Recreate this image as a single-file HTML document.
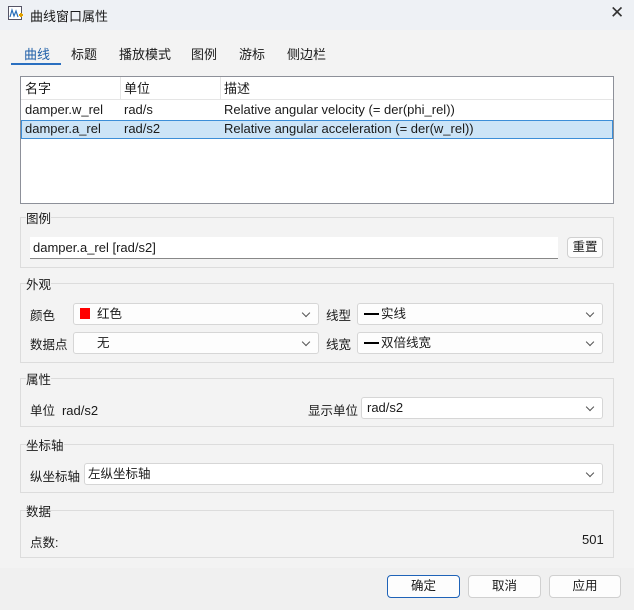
<!DOCTYPE html>
<html><head><meta charset="utf-8"><style>
*{box-sizing:border-box;margin:0;padding:0}
body{width:634px;height:610px;position:relative;background:#f3f3f3;font-family:"Liberation Sans","Noto Sans CJK SC",sans-serif;font-size:12.5px;color:#1a1a1a;overflow:hidden}
.a{position:absolute}
.grp{position:absolute;border:1px solid #dcdcdc;left:20px;width:594px}
.gl{position:absolute;background:#f3f3f3;left:30px}
.combo{position:absolute;background:#fdfdfd;border:1px solid #d6d6d6;border-radius:3px;height:22px;line-height:20px;padding-left:6px}
.combo::after{content:"";position:absolute;right:9px;top:6px;width:5px;height:5px;border-right:1px solid #555;border-bottom:1px solid #555;transform:rotate(45deg)}
.btn{position:absolute;background:#fdfdfd;border:1px solid #d0d0d0;border-radius:4px;text-align:center;line-height:21px;height:23px}
.cell{position:absolute;line-height:18px;font-size:13px}
</style></head><body>
<div class="a" style="left:0;top:0;width:634px;height:30px;background:#eef1f5"></div>
<svg class="a" style="left:8px;top:6px" width="16" height="16"><rect x="0.5" y="0.5" width="13" height="13" fill="#fff" stroke="#556"/><path d="M2 11 L4 4 L6 10 L8 5 L10 11" fill="none" stroke="#2a6fb8" stroke-width="1.2"/><path d="M11 9h4M13 7v4" stroke="#e0a000" stroke-width="2"/></svg>
<div class="a" style="left:30px;top:6px;font-size:13px">曲线窗口属性</div>
<div class="a" style="left:610px;top:3px;font-size:17px;color:#333">✕</div>

<div class="a" style="left:24px;top:44px;color:#1f5fa8;font-size:13px">曲线</div>
<div class="a" style="left:11px;top:63px;width:50px;height:2px;background:#2a6fc0"></div>
<div class="a" style="left:71px;top:44px;font-size:13px">标题</div>
<div class="a" style="left:119px;top:44px;font-size:13px">播放模式</div>
<div class="a" style="left:191px;top:44px;font-size:13px">图例</div>
<div class="a" style="left:239px;top:44px;font-size:13px">游标</div>
<div class="a" style="left:287px;top:44px;font-size:13px">侧边栏</div>

<div class="a" style="left:20px;top:76px;width:594px;height:128px;background:#fff;border:1px solid #8d9099"></div>
<div class="a" style="left:21px;top:77px;width:592px;height:23px;border-bottom:1px solid #e5e5e5"></div>
<div class="a" style="left:120px;top:77px;width:1px;height:23px;background:#e5e5e5"></div>
<div class="a" style="left:220px;top:77px;width:1px;height:23px;background:#e5e5e5"></div>
<div class="cell" style="left:25px;top:80px">名字</div><div class="cell" style="left:124px;top:80px">单位</div><div class="cell" style="left:224px;top:80px">描述</div>
<div class="cell" style="left:25px;top:101px">damper.w_rel</div><div class="cell" style="left:124px;top:101px">rad/s</div><div class="cell" style="left:224px;top:101px">Relative angular velocity (= der(phi_rel))</div>
<div class="a" style="left:21px;top:120px;width:592px;height:19px;background:#cce4f7;border:1px solid #3c8ed8"></div>
<div class="cell" style="left:25px;top:120px">damper.a_rel</div><div class="cell" style="left:124px;top:120px">rad/s2</div><div class="cell" style="left:224px;top:120px">Relative angular acceleration (= der(w_rel))</div>

<div class="grp" style="top:217px;height:51px"></div><div class="gl" style="top:208px;left:26px">图例</div>
<div class="a" style="left:30px;top:237px;width:528px;height:22px;background:#fff;border-bottom:1px solid #888;padding-left:3px;line-height:21px;font-size:13px">damper.a_rel [rad/s2]</div>
<div class="btn" style="left:567px;top:237px;width:36px;height:21px;line-height:19px">重置</div>

<div class="grp" style="top:283px;height:80px"></div><div class="gl" style="top:274px;left:26px">外观</div>
<div class="a" style="left:30px;top:305px">颜色</div>
<div class="combo" style="left:73px;top:303px;width:246px"><span style="display:inline-block;width:10px;height:11px;background:#f00;vertical-align:-1px;margin-right:7px"></span>红色</div>
<div class="a" style="left:326px;top:305px">线型</div>
<div class="combo" style="left:357px;top:303px;width:246px"><span style="display:inline-block;width:15px;height:2px;background:#000;vertical-align:3px;margin-right:2px"></span>实线</div>
<div class="a" style="left:30px;top:334px">数据点</div>
<div class="combo" style="left:73px;top:332px;width:246px;padding-left:23px">无</div>
<div class="a" style="left:326px;top:334px">线宽</div>
<div class="combo" style="left:357px;top:332px;width:246px"><span style="display:inline-block;width:15px;height:2px;background:#000;vertical-align:3px;margin-right:2px"></span>双倍线宽</div>

<div class="grp" style="top:378px;height:49px"></div><div class="gl" style="top:369px;left:26px">属性</div>
<div class="a" style="left:30px;top:400px">单位&nbsp;&nbsp;<span style="font-size:13px">rad/s2</span></div>
<div class="a" style="left:308px;top:400px">显示单位</div>
<div class="combo" style="left:361px;top:397px;width:242px;background:#fff;padding-left:5px;font-size:13px">rad/s2</div>

<div class="grp" style="top:444px;height:49px"></div><div class="gl" style="top:435px;left:26px">坐标轴</div>
<div class="a" style="left:30px;top:466px">纵坐标轴</div>
<div class="combo" style="left:84px;top:463px;width:519px;background:#fff;padding-left:3px">左纵坐标轴</div>

<div class="grp" style="top:510px;height:48px"></div><div class="gl" style="top:501px;left:26px">数据</div>
<div class="a" style="left:30px;top:532px">点数:</div>
<div class="a" style="left:582px;top:532px;font-size:13px">501</div>

<div class="a" style="left:0;top:568px;width:634px;height:42px;background:#f0f0f0"></div>
<div class="btn" style="left:387px;top:575px;width:73px;border:1px solid #1f63b8">确定</div>
<div class="btn" style="left:468px;top:575px;width:73px">取消</div>
<div class="btn" style="left:549px;top:575px;width:72px">应用</div>
</body></html>
